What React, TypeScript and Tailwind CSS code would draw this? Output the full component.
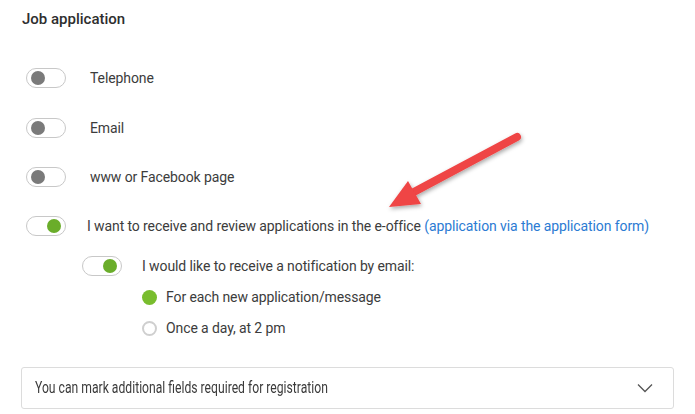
import React from "react";

function Toggle({ on }: { on: boolean }) {
  return (
    <div className="flex h-[20px] w-[40px] shrink-0 items-center rounded-full border border-[#c8c8c8] bg-white px-[4px]">
      <div
        className={
          on
            ? "ml-auto h-[14px] w-[14px] rounded-full bg-[#6aad2a]"
            : "h-[14px] w-[14px] rounded-full bg-[#7a7a7a]"
        }
      />
    </div>
  );
}

export default function App() {
  return (
    <div
      className="relative h-[414px] w-[695px] overflow-hidden bg-white text-[#3c3c3c]"
      style={{ fontFamily: "Roboto, 'Noto Sans', sans-serif" }}
    >
      <div className="pl-[22px] pt-[9px] text-[15px] font-medium leading-[20px] text-[#2e2e2e]">
        Job application
      </div>

      <div className="mt-[39px] flex flex-col pl-[26px] text-[14px] tracking-[-0.1px]">
        <div className="flex h-[20px] items-center gap-[24px]">
          <Toggle on={false} />
          <span>Telephone</span>
        </div>
        <div className="mt-[30px] flex h-[20px] items-center gap-[24px]">
          <Toggle on={false} />
          <span>Email</span>
        </div>
        <div className="mt-[29px] flex h-[20px] items-center gap-[24px]">
          <Toggle on={false} />
          <span>www or Facebook page</span>
        </div>
        <div className="mt-[29px] flex h-[20px] items-center gap-[21px]">
          <Toggle on={true} />
          <span>
            I want to receive and review applications in the e-office{" "}
            <span className="text-[#2b7bd3]">(application via the application form)</span>
          </span>
        </div>
        <div className="mt-[20px] flex h-[20px] items-center gap-[20px] pl-[56px]">
          <Toggle on={true} />
          <span>I would like to receive a notification by email:</span>
        </div>
        <div className="mt-[11px] flex h-[20px] items-center gap-[9px] pl-[116px]">
          <div className="h-[15px] w-[15px] rounded-full bg-[#79bd2e]" />
          <span>For each new application/message</span>
        </div>
        <div className="mt-[11px] flex h-[20px] items-center gap-[9px] pl-[116px]">
          <div className="h-[15px] w-[15px] rounded-full border-2 border-[#cfcfcf] bg-white" />
          <span>Once a day, at 2 pm</span>
        </div>
      </div>

      <div className="mx-[21px] mt-[29px] flex h-[42px] items-center justify-between rounded-[3px] border border-[#dcdcdc] pl-[13px] pr-[20px]">
        <span className="inline-block origin-left scale-x-[0.76] whitespace-nowrap text-[16px] text-[#3a3a3a]">
          You can mark additional fields required for registration
        </span>
        <svg width="16" height="10" viewBox="0 0 16 10" fill="none">
          <path d="M1 1.5 L8 8.5 L15 1.5" stroke="#555" strokeWidth="1.3" />
        </svg>
      </div>

      <svg
        className="absolute left-0 top-0"
        width="695"
        height="414"
        viewBox="0 0 695 414"
        style={{ pointerEvents: "none" }}
      >
        <defs>
          <filter id="sh" x="-20%" y="-20%" width="140%" height="140%">
            <feDropShadow dx="1" dy="2" stdDeviation="2" floodColor="#000" floodOpacity="0.35" />
          </filter>
        </defs>
        <g filter="url(#sh)">
          <line x1="517" y1="137" x2="412" y2="193" stroke="#ef4444" strokeWidth="8" strokeLinecap="round" />
          <polygon points="389,207 408,181 421,204" fill="#ef4444" />
        </g>
      </svg>
    </div>
  );
}
